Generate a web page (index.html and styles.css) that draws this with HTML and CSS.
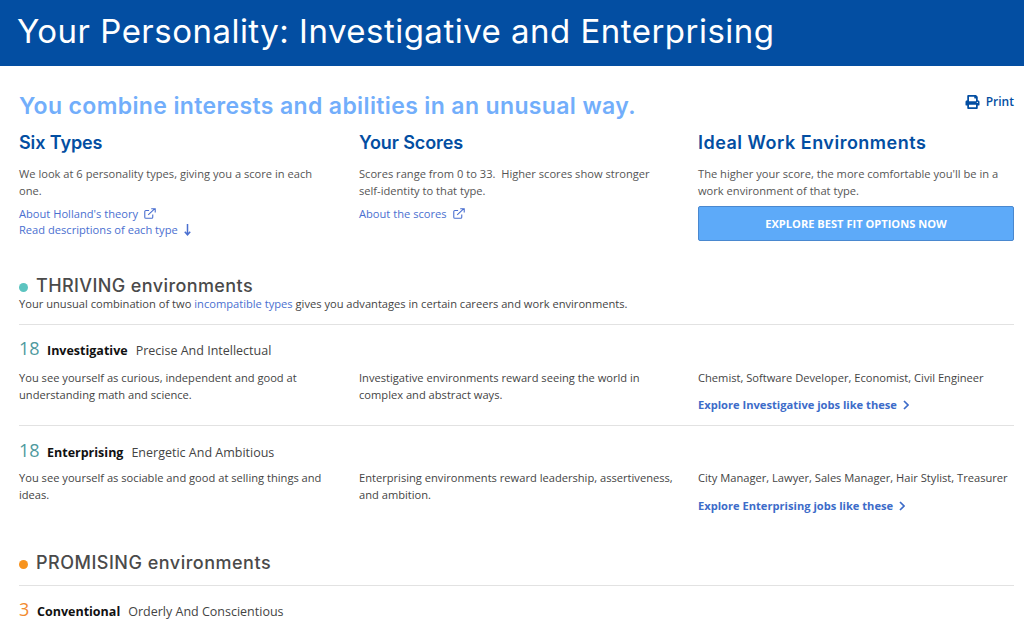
FILE: index.html
```html
<!DOCTYPE html>
<html lang="en">
<head>
<meta charset="utf-8">
<title>Your Personality</title>
<link rel="stylesheet" href="styles.css">
</head>
<body>
<header class="banner"><h1>Your Personality: Investigative and Enterprising</h1></header>
<main class="content">
  <div class="headline">
    <h2>You combine interests and abilities in an unusual way.</h2>
    <a class="print" href="#"><svg width="15" height="14" viewBox="0 0 512 512"><path fill="currentColor" d="M448 192V77.25c0-8.49-3.37-16.62-9.37-22.63L393.37 9.37c-6-6-14.14-9.37-22.63-9.37H96C78.33 0 64 14.33 64 32v160c-35.35 0-64 28.65-64 64v112c0 8.84 7.16 16 16 16h48v96c0 17.67 14.33 32 32 32h320c17.67 0 32-14.33 32-32v-96h48c8.84 0 16-7.16 16-16V256c0-35.35-28.65-64-64-64zm-64 256H128v-96h256v96zm0-224H128V64h192v48c0 8.84 7.16 16 16 16h48v96zm48 72c-13.25 0-24-10.75-24-24 0-13.26 10.75-24 24-24s24 10.74 24 24c0 13.25-10.75 24-24 24z"/></svg>Print</a>
  </div>
  <section class="intro">
    <div class="col">
      <h3>Six Types</h3>
      <p>We look at 6 personality types, giving you a score in each one.</p>
      <a class="link" href="#">About Holland's theory<svg class="ext" width="12" height="11" viewBox="0 0 13 12"><path fill="none" stroke="currentColor" stroke-width="1.2" d="M9.5 7v3a1.2 1.2 0 0 1-1.2 1.2H2A1.2 1.2 0 0 1 .8 10V4A1.2 1.2 0 0 1 2 2.800h3.500M4.500 7.500 11.500 1M7.800.8h4.400v4.200"/></svg></a>
      <a class="link" href="#">Read descriptions of each type<svg class="down" width="7" height="12" viewBox="0 0 7 12"><path fill="none" stroke="currentColor" stroke-width="1.500" d="M3.500 0v10.500M.8 7.800l2.700 3 2.700-3"/></svg></a>
    </div>
    <div class="col">
      <h3>Your Scores</h3>
      <p>Scores range from 0 to 33.&nbsp; Higher scores show stronger self-identity to that type.</p>
      <a class="link" href="#">About the scores<svg class="ext" width="12" height="11" viewBox="0 0 13 12"><path fill="none" stroke="currentColor" stroke-width="1.2" d="M9.5 7v3a1.2 1.2 0 0 1-1.2 1.2H2A1.2 1.2 0 0 1 .8 10V4A1.2 1.2 0 0 1 2 2.800h3.500M4.500 7.500 11.500 1M7.800.8h4.400v4.200"/></svg></a>
    </div>
    <div class="col last">
      <h3>Ideal Work Environments</h3>
      <p>The higher your score, the more comfortable you'll be in a work environment of that type.</p>
      <a class="cta" href="#">EXPLORE BEST FIT OPTIONS NOW</a>
    </div>
  </section>

  <section class="group thriving">
    <h2 class="group-title"><span class="dot teal"></span>THRIVING environments</h2>
    <p class="group-note">Your unusual combination of two <a href="#">incompatible types</a> gives you advantages in certain careers and work environments.</p>
    <article class="type first">
      <div class="type-head"><span class="score teal-text">18</span><strong>Investigative</strong><span class="tag">Precise And Intellectual</span></div>
      <div class="type-body">
        <p>You see yourself as curious, independent and good at understanding math and science.</p>
        <p>Investigative environments reward seeing the world in complex and abstract ways.</p>
        <div><p>Chemist, Software Developer, Economist, Civil Engineer</p><a class="jobs" href="#">Explore Investigative jobs like these<svg width="6" height="10" viewBox="0 0 6 10"><path fill="none" stroke="currentColor" stroke-width="1.700" d="M1 1l4 4-4 4"/></svg></a></div>
      </div>
    </article>
    <article class="type">
      <div class="type-head"><span class="score teal-text">18</span><strong>Enterprising</strong><span class="tag">Energetic And Ambitious</span></div>
      <div class="type-body">
        <p>You see yourself as sociable and good at selling things and ideas.</p>
        <p>Enterprising environments reward leadership, assertiveness, and ambition.</p>
        <div><p>City Manager, Lawyer, Sales Manager, Hair Stylist, Treasurer</p><a class="jobs" href="#">Explore Enterprising jobs like these<svg width="6" height="10" viewBox="0 0 6 10"><path fill="none" stroke="currentColor" stroke-width="1.700" d="M1 1l4 4-4 4"/></svg></a></div>
      </div>
    </article>
  </section>

  <section class="group promising">
    <h2 class="group-title"><span class="dot orange"></span>PROMISING environments</h2>
    <article class="type first">
      <div class="type-head"><span class="score orange-text">3</span><strong>Conventional</strong><span class="tag">Orderly And Conscientious</span></div>
    </article>
  </section>
</main>
</body>
</html>
```
FILE: styles.css
```css
* { box-sizing: border-box; }
html, body { margin: 0; height: 626px; overflow: hidden; background: #fff; }
body { font-family: "Open Sans", sans-serif; font-size: 11.130px; line-height: 16.500px; color: #555; }
a { text-decoration: none; color: #4a6fd0; }
p { margin: 0; }
h1, h2, h3 { margin: 0; font-family: Inter, sans-serif; }

.banner { height: 66px; background: #034ea2; padding: 11px 17px 0; }
.banner h1 { font-size: 33px; line-height: 40px; font-weight: 400; letter-spacing: 0.48px; color: #fff; }

.content { padding: 0 10px 0 19px; }
.headline { display: flex; justify-content: space-between; padding-top: 26px; height: 66px; }
.headline h2 { font-size: 23px; line-height: 29px; font-weight: 600; letter-spacing: 0.37px; color: #72aefb; }
.print { display: flex; align-items: center; gap: 6px; height: 20px; margin-top: 0; font-size: 12px; font-weight: 600; color: #034ea2; }

.intro { display: grid; grid-template-columns: 340px 339px 316px; }
.col { padding-right: 26px; }
.col.last { padding-right: 0; }
.col h3 { font-size: 18px; line-height: 22px; font-weight: 600; letter-spacing: -0.1px; color: #034ea2; margin-bottom: 12px; }
.col.last h3 { letter-spacing: 0.5px; }
.col p { margin-bottom: 7px; }
.link { display: block; line-height: 16px; }
.ext { margin-left: 6px; vertical-align: -1px; }
.down { margin-left: 6px; vertical-align: -2px; }
.cta { display: block; height: 35px; background: #5daaf9; border: 1px solid #4a88cf; border-radius: 2px; color: #fff; font-weight: 700; font-size: 11.100px; line-height: 33px; text-align: center; }

.group-title { display: flex; align-items: center; font-size: 18px; line-height: 22px; font-weight: 500; letter-spacing: 0.4px; color: #4a4a4a; }
.dot { width: 9px; height: 9px; border-radius: 50%; margin-right: 8px; margin-top: 3px; }
.teal { background: #5cc4c0; }
.orange { background: #f7931e; }
.teal-text { color: #4f9a9e; }
.orange-text { color: #f28a30; }
.thriving { margin-top: 34px; }
.group-note { color: #444; line-height: 16px; margin-top: -1px; }
.group-note a { color: #4a6fd0; }

.type { border-top: 1px solid #e2e2e2; padding-top: 11px; height: 101px; }
.type.first { margin-top: 12px; }
.type + .type { padding-top: 12px; }
.type-head { display: flex; align-items: baseline; height: 24px; font-size: 12.500px; color: #444; }
.score { font-size: 18px; line-height: 24px; font-weight: 400; min-width: 28px; }
.type-head strong { font-weight: 700; color: #111; margin-right: 8px; }
.type-body { display: grid; grid-template-columns: 340px 339px 316px; margin-top: 10px; color: #444; }
.type + .type .type-body { margin-top: 8px; }
.type + .type .jobs { margin-top: 11px; }
.type-body > p { padding-right: 20px; }
.jobs { display: block; margin-top: 10px; font-weight: 700; color: #3d6cc9; }
.jobs svg { margin-left: 6px; vertical-align: -1px; }

.promising { margin-top: 26px; }
.promising .group-title { letter-spacing: 0.5px; }
.promising .score { min-width: 18px; }
.promising .type.first { margin-top: 11px; padding-top: 11px; }
```
